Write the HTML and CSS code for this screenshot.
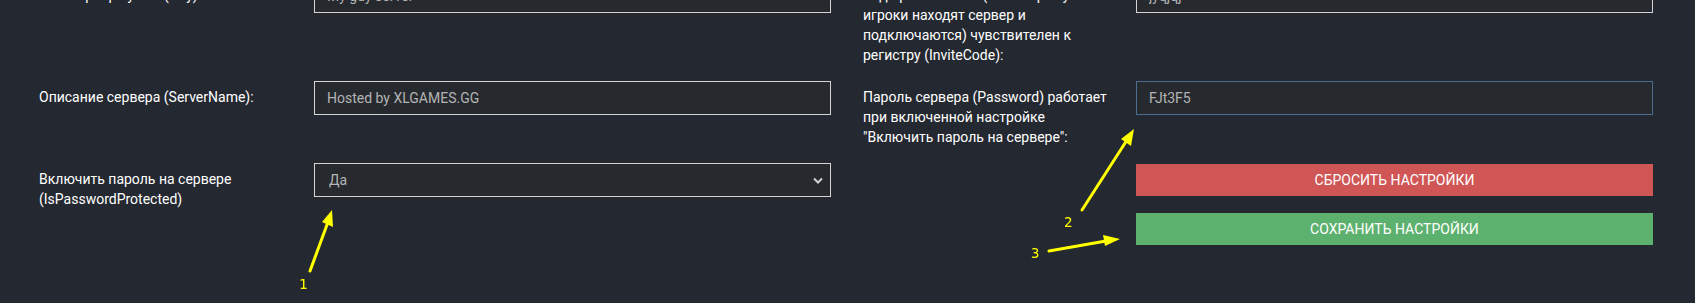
FILE: index.html
```html
<!DOCTYPE html>
<html lang="ru">
<head>
    <meta charset="UTF-8">
    <meta name="viewport" content="width=device-width, initial-scale=1.0">
    <title>Настройки сервера</title>
    <link rel="stylesheet" href="styles.css">
</head>
<body>
    <div class="settings">
        <div class="form-row">
            <div class="field">
                <label class="field-label">Имя сервера у нас (Guy):</label>
                <input class="field-input" type="text" value="My guy server">
            </div>
            <div class="field">
                <label class="field-label">Код приглашения (по которому игроки находят сервер и подключаются) чувствителен к регистру (InviteCode):</label>
                <input class="field-input" type="text" value="jyqjqj">
            </div>
        </div>

        <div class="form-row">
            <div class="field">
                <label class="field-label">Описание сервера (ServerName):</label>
                <input class="field-input" type="text" value="Hosted by XLGAMES.GG">
            </div>
            <div class="field">
                <label class="field-label">Пароль сервера (Password) работает при включенной настройке "Включить пароль на сервере":</label>
                <input class="field-input field-focus" type="text" value="FJt3F5" autofocus>
            </div>
        </div>

        <div class="form-row">
            <div class="field">
                <label class="field-label">Включить пароль на сервере (IsPasswordProtected)</label>
                <div class="select-wrap">
                    <select class="field-input field-select">
                        <option>Да</option>
                        <option>Нет</option>
                    </select>
                    <svg class="select-arrow" width="10" height="7" viewBox="0 0 10 7">
                        <path d="M1 1.5 L5 5.5 L9 1.5" fill="none" stroke="#d0d0d0" stroke-width="2"/>
                    </svg>
                </div>
            </div>
            <div class="field">
                <div class="field-label"></div>
                <div class="buttons">
                    <button class="btn btn-reset">Сбросить настройки</button>
                    <button class="btn btn-save">Сохранить настройки</button>
                </div>
            </div>
        </div>
    </div>

    <!-- пометки поверх скриншота -->
    <svg class="notes" width="1695" height="303" viewBox="0 0 1695 303">
        <g stroke="#ffff00" stroke-width="3" stroke-linecap="round">
            <line x1="310" y1="271" x2="328" y2="222"/>
            <line x1="1082" y1="210" x2="1127" y2="140"/>
            <line x1="1049" y1="251" x2="1106" y2="241"/>
        </g>
        <g fill="#ffff00">
            <polygon points="332,210 333,227 322,222"/>
            <polygon points="1134,129 1131,146 1121,139"/>
            <polygon points="1120,239 1105,246 1103,235"/>
        </g>
        <g class="note-num">
            <text x="299" y="289">1</text>
            <text x="1064" y="227">2</text>
            <text x="1031" y="258">3</text>
        </g>
    </svg>
</body>
</html>
```

FILE: styles.css
```css
* {
    margin: 0;
    padding: 0;
    box-sizing: border-box;
}

body {
    font-family: Roboto, 'Liberation Sans', sans-serif;
    background: #242830;
    color: #ffffff;
    font-size: 14px;
    height: 303px;
    overflow: hidden;
    position: relative;
}

.settings {
    padding: 0 42px 0 39px;
    margin-top: -21px;
}

.form-row {
    display: grid;
    grid-template-columns: 792px 1fr;
    column-gap: 32px;
    margin-bottom: 16px;
}

.field {
    display: grid;
    grid-template-columns: 1fr 517px;
    align-items: start;
}

.field-label {
    padding: 6px 26px 0 0;
    line-height: 20px;
}

.field-input {
    display: block;
    width: 100%;
    height: 34px;
    background: #262a2f;
    border: 1px solid #d4d4d4;
    color: #b4b4b4;
    font-family: Roboto, 'Liberation Sans', sans-serif;
    font-size: 14px;
    padding: 0 12px;
    outline: none;
    caret-color: #d4d4d4;
}

.field-focus {
    border-color: #4a6d90;
}

.select-wrap {
    position: relative;
}

.field-select {
    appearance: none;
    -webkit-appearance: none;
    padding-left: 14px;
}

.select-arrow {
    position: absolute;
    right: 8px;
    top: 14px;
}

.buttons {
    display: flex;
    flex-direction: column;
    gap: 17px;
    padding-top: 1px;
}

.btn {
    height: 32px;
    border: none;
    color: #ffffff;
    font-family: Roboto, 'Liberation Sans', sans-serif;
    font-size: 14px;
    text-transform: uppercase;
    cursor: pointer;
}

.btn-reset {
    background: #d05656;
}

.btn-save {
    background: #5db16e;
}

.notes {
    position: absolute;
    left: 0;
    top: 0;
    pointer-events: none;
}

.note-num {
    fill: #ffff00;
    font-family: 'DejaVu Sans Mono', monospace;
    font-size: 14px;
}
```
